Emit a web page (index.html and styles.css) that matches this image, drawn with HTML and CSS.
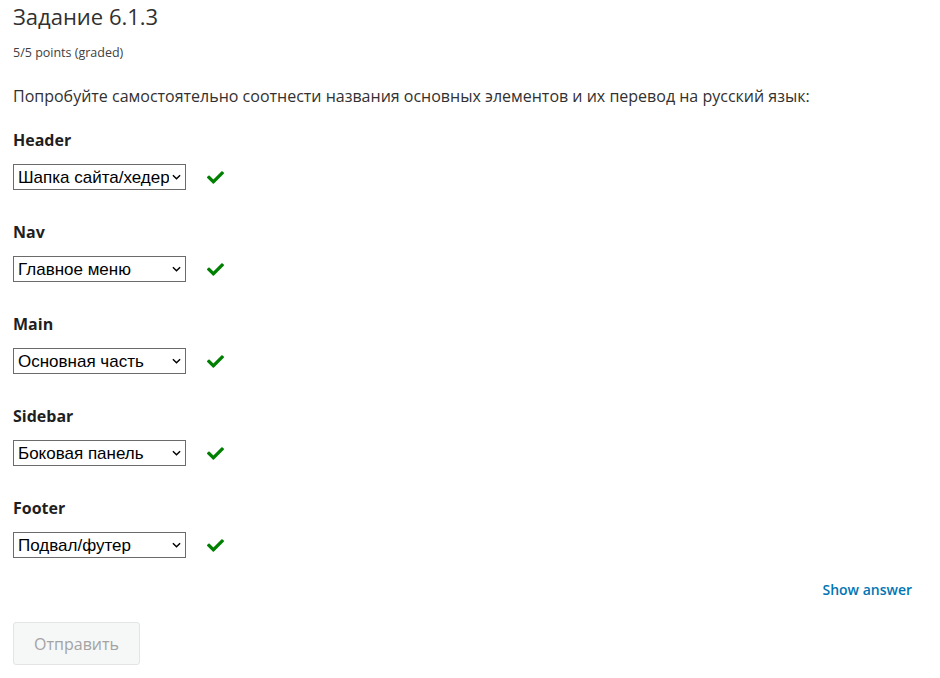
FILE: index.html
```html
<!DOCTYPE html>
<html lang="ru">
<head>
<meta charset="utf-8">
<title>Задание 6.1.3</title>
<link rel="stylesheet" href="styles.css">
</head>
<body>
<div class="problem">
  <h2 class="title">Задание 6.1.3</h2>
  <div class="points">5/5 points (graded)</div>
  <p class="prompt">Попробуйте самостоятельно соотнести названия основных элементов и их перевод на русский язык:</p>

  <div class="item">
    <div class="label">Header</div>
    <div class="row">
      <span class="sel"><select><option>Шапка сайта/хедер</option></select><svg class="chev" viewBox="0 0 10 6" width="9" height="6"><path d="M1 1l4 4 4-4" fill="none" stroke="#000" stroke-width="1.6"/></svg></span>
      <svg class="check" viewBox="0 0 512 512" width="17" height="17"><path fill="#008000" d="M173.9 439.4L7.5 273c-10-10-10-26.2 0-36.2l36.2-36.2c10-10 26.2-10 36.2 0L192 312.7 432.1 72.6c10-10 26.2-10 36.2 0l36.2 36.2c10 10 10 26.2 0 36.2L210.1 439.4c-10 10-26.2 10-36.2 0z"/></svg>
    </div>
  </div>

  <div class="item">
    <div class="label">Nav</div>
    <div class="row">
      <span class="sel"><select><option>Главное меню</option></select><svg class="chev" viewBox="0 0 10 6" width="9" height="6"><path d="M1 1l4 4 4-4" fill="none" stroke="#000" stroke-width="1.6"/></svg></span>
      <svg class="check" viewBox="0 0 512 512" width="17" height="17"><path fill="#008000" d="M173.9 439.4L7.5 273c-10-10-10-26.2 0-36.2l36.2-36.2c10-10 26.2-10 36.2 0L192 312.7 432.1 72.6c10-10 26.2-10 36.2 0l36.2 36.2c10 10 10 26.2 0 36.2L210.1 439.4c-10 10-26.2 10-36.2 0z"/></svg>
    </div>
  </div>

  <div class="item">
    <div class="label">Main</div>
    <div class="row">
      <span class="sel"><select><option>Основная часть</option></select><svg class="chev" viewBox="0 0 10 6" width="9" height="6"><path d="M1 1l4 4 4-4" fill="none" stroke="#000" stroke-width="1.6"/></svg></span>
      <svg class="check" viewBox="0 0 512 512" width="17" height="17"><path fill="#008000" d="M173.9 439.4L7.5 273c-10-10-10-26.2 0-36.2l36.2-36.2c10-10 26.2-10 36.2 0L192 312.7 432.1 72.6c10-10 26.2-10 36.2 0l36.2 36.2c10 10 10 26.2 0 36.2L210.1 439.4c-10 10-26.2 10-36.2 0z"/></svg>
    </div>
  </div>

  <div class="item">
    <div class="label">Sidebar</div>
    <div class="row">
      <span class="sel"><select><option>Боковая панель</option></select><svg class="chev" viewBox="0 0 10 6" width="9" height="6"><path d="M1 1l4 4 4-4" fill="none" stroke="#000" stroke-width="1.6"/></svg></span>
      <svg class="check" viewBox="0 0 512 512" width="17" height="17"><path fill="#008000" d="M173.9 439.4L7.5 273c-10-10-10-26.2 0-36.2l36.2-36.2c10-10 26.2-10 36.2 0L192 312.7 432.1 72.6c10-10 26.2-10 36.2 0l36.2 36.2c10 10 10 26.2 0 36.2L210.1 439.4c-10 10-26.2 10-36.2 0z"/></svg>
    </div>
  </div>

  <div class="item">
    <div class="label">Footer</div>
    <div class="row">
      <span class="sel"><select><option>Подвал/футер</option></select><svg class="chev" viewBox="0 0 10 6" width="9" height="6"><path d="M1 1l4 4 4-4" fill="none" stroke="#000" stroke-width="1.6"/></svg></span>
      <svg class="check" viewBox="0 0 512 512" width="17" height="17"><path fill="#008000" d="M173.9 439.4L7.5 273c-10-10-10-26.2 0-36.2l36.2-36.2c10-10 26.2-10 36.2 0L192 312.7 432.1 72.6c10-10 26.2-10 36.2 0l36.2 36.2c10 10 10 26.2 0 36.2L210.1 439.4c-10 10-26.2 10-36.2 0z"/></svg>
    </div>
  </div>

  <div class="actions">
    <a class="show" href="#">Show answer</a>
  </div>
  <button class="submit" disabled>Отправить</button>
</div>
</body>
</html>
```

FILE: styles.css
```css
* { box-sizing: border-box; }
html, body { margin: 0; padding: 0; background: #fff; }
body {
  font-family: "Open Sans", "Noto Sans", sans-serif;
  color: #313131;
  width: 940px;
  height: 678px;
  overflow: hidden;
}
.problem {
  padding: 2px 28px 0 13px;
}
.title {
  margin: 0;
  font-size: 22px;
  font-weight: 400;
  line-height: 28px;
  color: #313131;
}
.points {
  margin-top: 15px;
  font-size: 12.5px;
  line-height: 16px;
  color: #414141;
}
.prompt {
  margin: 23px 0 0;
  font-size: 16px;
  line-height: 24px;
  color: #313131;
}
.item {
  margin-top: 20px;
}
.item + .item {
  margin-top: 30px;
}
.label {
  font-weight: 700;
  font-size: 16px;
  line-height: 24px;
  color: #1f1f1f;
}
.row {
  margin-top: 12px;
  display: flex;
  align-items: center;
  gap: 21px;
}
.sel {
  position: relative;
  display: inline-block;
}
.sel select {
  appearance: none;
  -webkit-appearance: none;
  width: 173px;
  height: 26px;
  margin: 0;
  padding: 0 16px 0 4px;
  border: 1px solid #6b6b6b;
  border-radius: 0;
  background: #fff;
  font-family: "Liberation Sans", Arial, sans-serif;
  font-size: 17px;
  color: #000;
}
.chev {
  position: absolute;
  right: 5px;
  top: 10px;
  pointer-events: none;
}
.check { display: block; }
.actions {
  display: flex;
  justify-content: flex-end;
  margin-top: 22px;
  padding-right: 0;
}
.show {
  font-size: 14px;
  font-weight: 600;
  line-height: 20px;
  color: #0075b4;
  text-decoration: none;
}
.submit {
  display: block;
  margin-top: 22px;
  width: 127px;
  height: 43px;
  border: 1px solid #e3e5e5;
  border-radius: 3px;
  background: #f6f7f7;
  color: #a3a3a3;
  font-family: "Open Sans", "Noto Sans", sans-serif;
  font-size: 16px;
}
```
